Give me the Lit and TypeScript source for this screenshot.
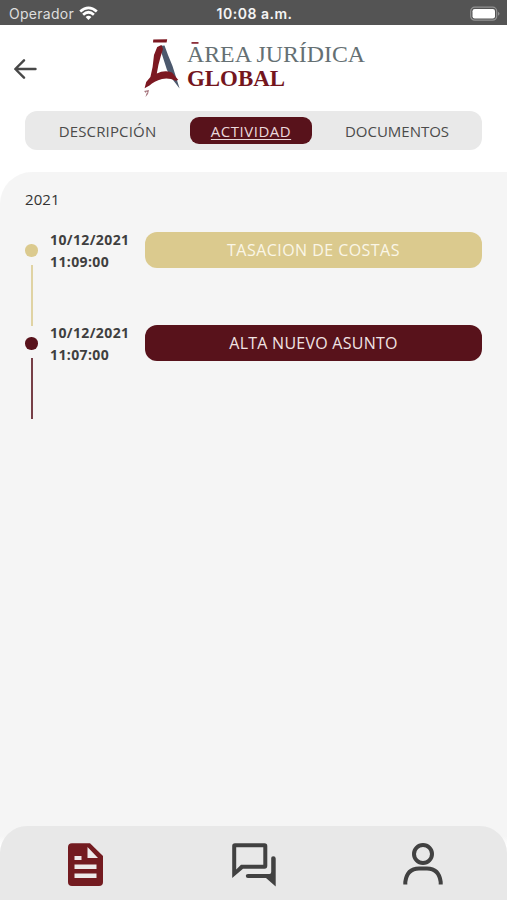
import { LitElement, html, css, svg } from "lit";
import { customElement, property } from "lit/decorators.js";

@customElement("status-bar")
class StatusBar extends LitElement {
  static styles = css`
    :host { display: grid; grid-template-columns: 1fr auto 1fr; align-items: center; height: 25px; padding: 2px 7px 0 9px; box-sizing: border-box; background: #545454; color: #f4f4f4; font: 14px/22px Inter, sans-serif; }
    .carrier { display: flex; align-items: center; gap: 5px; letter-spacing: 0.28px; color: #dedede; }
    .time { font-weight: 600; letter-spacing: 0.5px; font-size: 14px; }
    .battery { justify-self: end; display: block; }
    svg { display: block; }
  `;
  render() {
    return html`
      <div class="carrier"><span>Operador</span>
        <svg width="19" height="15" viewBox="0 0 19 15" fill="none" stroke="#fff" stroke-width="2.7">
          <path d="M1.2 5.6Q9.5-2 17.8 5.6M4.1 8.7Q9.5 3.8 14.9 8.7" /><path d="M6.6 11.1Q9.5 8.6 12.4 11.1L9.5 14Z" fill="#fff" stroke="none" />
        </svg>
      </div>
      <div class="time">10:08 a.m.</div>
      <svg class="battery" width="30" height="16" viewBox="0 0 30 16">
        <rect x=".7" y="1.2" width="26" height="13" rx="4" fill="none" stroke="#929292" stroke-width="1.2" />
        <rect x="2.5" y="3" width="22.5" height="9.5" rx="2.2" fill="#fff" />
        <path d="M28 5.7Q31 7.7 28 9.7Z" fill="#929292" />
      </svg>`;
  }
}

@customElement("brand-header")
class BrandHeader extends LitElement {
  static styles = css`
    :host { display: flex; height: 86px; }
    .back { padding: 34px 0 0 14px; width: 128px; box-sizing: border-box; }
    svg { display: block; }
    .name { font: 24px "Liberation Serif", serif; fill: #657073; }
    .global { font: bold 22.5px "Liberation Serif", serif; fill: #74151d; }
  `;
  render() {
    return html`
      <div class="back">
        <svg width="24" height="20" viewBox="0 0 24 20" fill="none" stroke="#484848" stroke-width="2.4" stroke-linecap="round" stroke-linejoin="round"><path d="M21.5 10H1.5M10 1.3L1.3 10L10 18.7" /></svg>
      </div>
      <svg width="240" height="76" viewBox="128 25 240 76">
        <path d="M153.3 39.6L167.2 39.2L166.6 42.5L153 42.4Z" fill="#7c1821" />
        <path d="M159 46L164.5 45.5L168 55L172.5 66L179.6 88.5L173 80L167 70L161.5 53Z" fill="#4c596d" />
        <path d="M157.2 47L161.5 45L163 49L160.8 56L158.4 65L156.8 73.5Q164.5 69.5 172 72.5L178.3 80L175.5 80.8Q169 77.5 162 79Q154 81 149.5 85.5L144.6 88.2L146.2 82L150.4 77L152.6 67L154 55Z" fill="#7c1821" />
        <path d="M144 91L149 90L148 94L145.5 97L146.4 93.5Z" fill="#a8777f" /><path d="M146.2 91.6L147.6 92.2L146 94Z" fill="#fff" />
        <text class="name" x="187" y="61.5" textLength="178" lengthAdjust="spacingAndGlyphs">AREA JURÍDICA</text>
        <rect x="191.5" y="42" width="7" height="1.8" fill="#8e303a" />
        <text class="global" x="187" y="86" textLength="98" lengthAdjust="spacingAndGlyphs">GLOBAL</text>
      </svg>`;
  }
}

@customElement("section-tabs")
class SectionTabs extends LitElement {
  static styles = css`
    :host { display: grid; grid-template-columns: 165px 122px 170px; align-items: center; height: 39px; margin: 0 25px; border-radius: 12px; background: #e9e9e9; font: 15px/28px "Open Sans", sans-serif; color: #4b4b4b; text-align: center; }
    .tab { height: 27px; border-radius: 9px; white-space: nowrap; letter-spacing: 0.16px; }
    .documents { letter-spacing: 0px; }
    .active { background: #58121b; color: #ead9dc; letter-spacing: 0.5px; text-decoration: underline; text-decoration-thickness: 1px; text-underline-offset: 2px; }
  `;
  render() {
    return html`<div class="tab">DESCRIPCIÓN</div><div class="tab active">ACTIVIDAD</div><div class="tab documents">DOCUMENTOS</div>`;
  }
}

@customElement("timeline-entry")
class TimelineEntry extends LitElement {
  static styles = css`
    :host { display: grid; grid-template-columns: 25px 95px 1fr; height: 93px; --tone: #58121b; --ink: #f0e3e4; --track: 0.25px; }
    :host([kind="gold"]) { --tone: #dbca8e; --ink: #faf6e7; --track: 0.45px; }
    .rail { display: flex; flex-direction: column; align-items: flex-start; padding-top: 12px; gap: 8px; }
    .dot { width: 12.5px; height: 12.5px; border-radius: 50%; background: var(--tone); }
    .line { width: 2px; height: 61px; margin-left: 6px; background: var(--tone); opacity: 0.8; }
    .date { font: bold 14px/22px "Open Sans", sans-serif; letter-spacing: 0.38px; color: #3f3f3f; margin-top: -3px; }
    .label { height: 36px; border-radius: 12px; background: var(--tone); color: var(--ink); text-align: center; font: 16px/36px "Open Sans", sans-serif; letter-spacing: var(--track); }
  `;
  @property() date = "";
  @property() time = "";
  @property() label = "";
  render() {
    return html`
      <div class="rail"><div class="dot"></div><div class="line"></div></div>
      <div class="date"><div>${this.date}</div><div>${this.time}</div></div>
      <div class="label">${this.label}</div>`;
  }
}

const icons = [
  svg`<path d="M21 1.2H5Q1 1.2 1 5V40Q1 44 5 44H32Q36 44 36 40V14L23 1.2Z" fill="#731b20"/><path d="M20.5 5V16H31ZM7.5 14H14.5V18H7.5ZM7.5 22.5H29.5V27H7.5ZM7.5 31.5H29.5V36H7.5Z" fill="#eeeaea"/>`,
  svg`<path fill-rule="evenodd" d="M4 1.2H33.5Q36.3 1.2 36.3 4V23.5Q36.3 26.8 33.5 26.8H12L1.2 36V4Q1.2 1.2 4 1.2ZM5.2 5.2V27.5L10 22.7H32.3V5.2Z" fill="#414141"/><path d="M40.2 16Q40.2 14.2 42.2 14.2Q44.7 14.2 44.7 16.5V44.5L35 36H17Q14.8 36 14.8 33.8Q14.8 32 17 32H38.5Q40.2 32 40.2 30Z" fill="#414141"/>`,
  svg`<g fill="none" stroke="#414141" stroke-width="4"><circle cx="20" cy="12" r="9"/><path d="M2.3 42.5V40Q4 26.5 16 26.5H24Q36 26.5 37.7 40V42.5"/></g>`,
];

@customElement("bottom-nav")
class BottomNav extends LitElement {
  static styles = css`
    :host { display: flex; justify-content: space-between; height: 74px; box-sizing: border-box; padding: 16px 64px 0 67px; border-radius: 27px 27px 0 0; background: #e8e8e8; }
    svg { display: block; }
  `;
  render() {
    return html`
      <svg width="37" height="46" viewBox="0 0 37 46">${icons[0]}</svg>
      <svg width="46" height="46" viewBox="0 0 46 46">${icons[1]}</svg>
      <svg width="40" height="46" viewBox="0 0 40 46">${icons[2]}</svg>`;
  }
}

@customElement("app-root")
class AppRoot extends LitElement {
  static styles = css`
    :host { display: flex; flex-direction: column; height: 900px; overflow: hidden; background: #fff; }
    .panel { flex: 1; display: flex; flex-direction: column; margin-top: 22px; background: linear-gradient(#f5f5f5 664px, #fff 674px); border-radius: 32px 0 0 0; }
    .content { flex: 1; padding: 16px 25px 0; }
    .year { font: 15px/22px "Open Sans", sans-serif; letter-spacing: 0.1px; color: #333; margin-bottom: 22px; }
  `;
  render() {
    return html`
      <status-bar></status-bar>
      <brand-header></brand-header>
      <section-tabs></section-tabs>
      <div class="panel">
        <div class="content">
          <div class="year">2021</div>
          <timeline-entry kind="gold" date="10/12/2021" time="11:09:00" label="TASACION DE COSTAS"></timeline-entry>
          <timeline-entry date="10/12/2021" time="11:07:00" label="ALTA NUEVO ASUNTO"></timeline-entry>
        </div>
        <bottom-nav></bottom-nav>
      </div>`;
  }
}
